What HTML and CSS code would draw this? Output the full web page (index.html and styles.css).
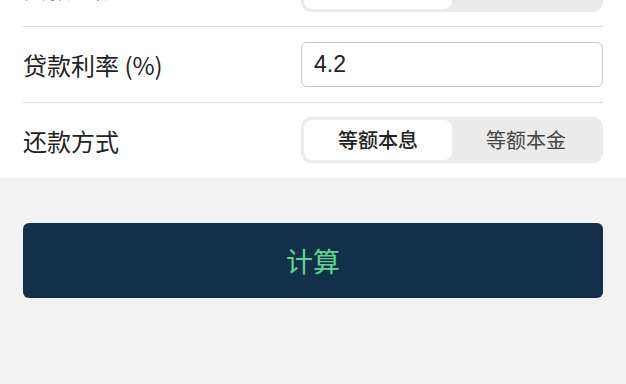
FILE: index.html
```html
<!DOCTYPE html>
<html lang="zh-CN">
<head>
    <meta charset="UTF-8">
    <meta name="viewport" content="width=device-width, initial-scale=1.0">
    <title>房贷计算器</title>
    <link rel="stylesheet" href="styles.css">
</head>
<body>
    <div class="form">
        <div class="row">
            <span class="label">贷款期限</span>
            <div class="segment">
                <button class="seg-item active">商业贷款</button>
                <button class="seg-item">公积金</button>
            </div>
        </div>
        <div class="row">
            <span class="label">贷款利率 (%)</span>
            <input class="field" type="text" value="4.2">
        </div>
        <div class="row">
            <span class="label">还款方式</span>
            <div class="segment">
                <button class="seg-item active">等额本息</button>
                <button class="seg-item">等额本金</button>
            </div>
        </div>
    </div>

    <div class="actions">
        <button class="calc">计算</button>
    </div>
</body>
</html>
```

FILE: styles.css
```css
body {
    margin: 0;
    background-color: #f2f2f2;
    font-family: "Noto Sans CJK SC", "Noto Sans", sans-serif;
    color: #222;
}
.form {
    background: white;
    margin-top: -49px;
}
.row {
    display: flex;
    align-items: center;
    justify-content: space-between;
    height: 75px;
    margin: 0 23px;
    border-bottom: 1px solid #dcdcdc;
}
.row:first-child .segment {
    margin-top: 1px;
}
.row:first-child .label {
    margin-top: -3px;
}
.row:last-child {
    border-bottom: none;
    height: 75px;
}
.label {
    font-size: 24px;
}
.field {
    box-sizing: border-box;
    width: 302px;
    height: 45px;
    border: 1px solid #c6c6c6;
    border-radius: 6px;
    padding: 0 12px;
    font-family: "Liberation Sans", "Noto Sans CJK SC", sans-serif;
    font-size: 23px;
    color: #222;
    background: white;
    outline: none;
}
.segment {
    box-sizing: border-box;
    display: flex;
    width: 302px;
    height: 46px;
    padding: 3px;
    margin-top: -2px;
    background-color: #ebebeb;
    border-radius: 10px;
}
.seg-item {
    flex: 1;
    border: none;
    background: transparent;
    border-radius: 8px;
    font-family: "Noto Sans CJK SC", sans-serif;
    font-size: 20px;
    color: #444;
    padding: 0;
}
.seg-item.active {
    background: white;
    font-weight: 500;
    color: #222;
}
.actions {
    padding: 45px 23px 0;
}
.calc {
    display: block;
    width: 100%;
    height: 75px;
    border: none;
    border-radius: 6px;
    background-color: #13304a;
    color: #5fd48e;
    font-family: "Noto Sans CJK SC", sans-serif;
    font-size: 27px;
}
```
